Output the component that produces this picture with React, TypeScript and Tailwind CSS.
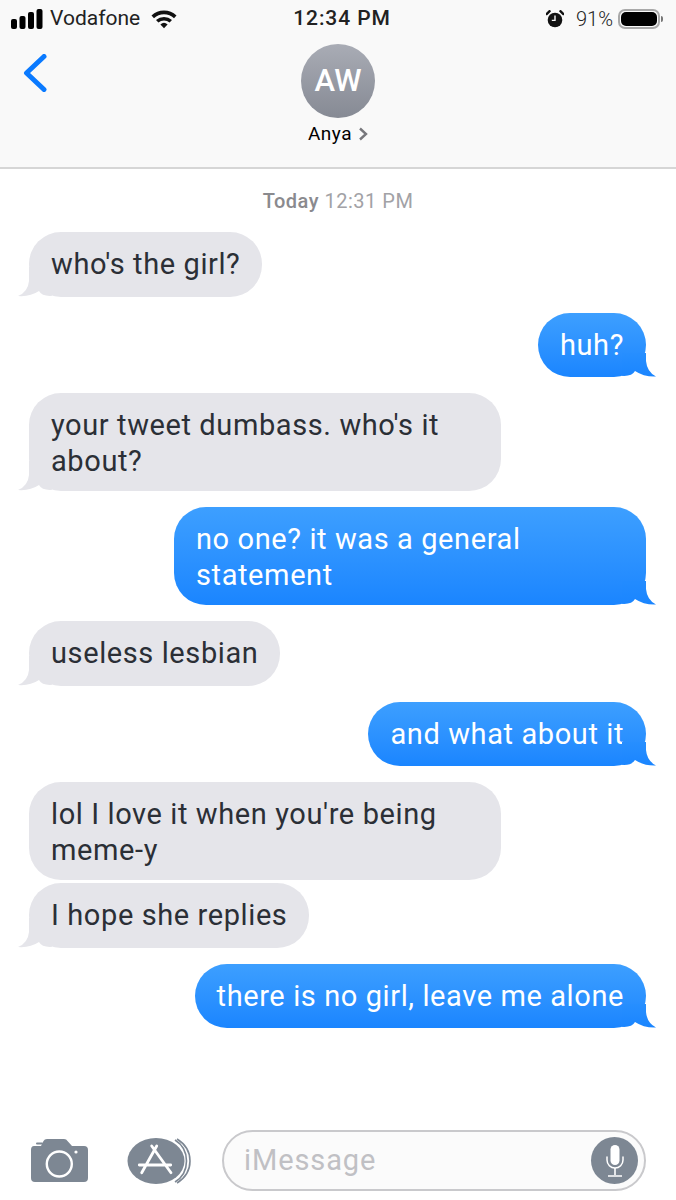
import React from 'react';

const SignalIcon = () => (
  <svg width="32" height="20" viewBox="0 0 32 20" className="shrink-0">
    <rect x="0" y="10" width="6" height="10" rx="2" fill="#000" />
    <rect x="8.5" y="7" width="6" height="13" rx="2" fill="#000" />
    <rect x="17" y="3" width="6" height="17" rx="2" fill="#000" />
    <rect x="25.5" y="0" width="6" height="20" rx="2" fill="#000" />
  </svg>
);

const WifiIcon = () => (
  <svg width="26" height="20" viewBox="0 0 26 20">
    <path d="M0.5 6.5 A18 18 0 0 1 25.5 6.5 L23 9.2 A14.5 14.5 0 0 0 3 9.2 Z" fill="#111" />
    <path d="M5 11 A12 12 0 0 1 21 11 L18.6 13.6 A8.5 8.5 0 0 0 7.4 13.6 Z" fill="#111" />
    <path d="M9.4 15.4 A5.5 5.5 0 0 1 16.6 15.4 L13 19.2 Z" fill="#111" />
  </svg>
);

const AlarmIcon = () => (
  <svg width="18" height="18" viewBox="0 0 18 18">
    <circle cx="9" cy="10" r="7.3" fill="#111" />
    <path d="M9 5.5 V10.4 H5.8" stroke="#f9f9f9" strokeWidth="1.4" fill="none" />
    <path d="M0.6 4 L3.6 1.2 M17.4 4 L14.4 1.2" stroke="#111" strokeWidth="2.4" strokeLinecap="round" />
  </svg>
);

const BatteryIcon = () => (
  <div className="flex items-center gap-[1px]">
    <div className="w-[42px] h-[20px] rounded-[7px] border-2 border-[#a9a9a9] p-[1px]">
      <div className="w-full h-full rounded-[5px] bg-black" />
    </div>
    <div className="w-[2px] h-[6px] rounded-r-full bg-[#777]" />
  </div>
);

const CameraIcon = () => (
  <svg width="59" height="44" viewBox="0 0 59 44">
    <path d="M4 7 H11 L13.5 2 Q14.5 0 17 0 H34 Q36.5 0 37.5 2 L42 7 H54 Q58 7 58 11 V39 Q58 43 54 43 H5 Q1 43 1 39 V11 Q1 7 4 7 Z" fill="#7d8793" />
    <rect x="6" y="3.5" width="7" height="2" rx="1" fill="#7d8793" />
    <circle cx="29.3" cy="25" r="12.5" fill="none" stroke="#fff" strokeWidth="2.4" />
    <circle cx="46" cy="13" r="1.6" fill="#fff" />
  </svg>
);

const AppStoreIcon = () => (
  <svg width="64" height="48" viewBox="0 0 64 48">
    <path d="M48 3 Q59.5 10 59.5 24 Q59.5 38 48 45" fill="none" stroke="#7d8793" strokeWidth="1.6" />
    <path d="M50 2 Q63 10 63 24 Q63 38 50 46" fill="none" stroke="#7d8793" strokeWidth="1.6" />
    <ellipse cx="29" cy="24" rx="28.5" ry="23" fill="#7d8793" />
    <path d="M24.7 9 L44 35.7 M29.7 9 L14.7 35.7 M12.3 28 H43.7" fill="none" stroke="#fff" strokeWidth="2.8" strokeLinecap="round" />
  </svg>
);

const MicIcon = () => (
  <div className="w-[47px] h-[47px] rounded-full bg-[#7d8793] flex items-center justify-center">
    <svg width="20" height="34" viewBox="0 0 20 34">
      <rect x="5.5" y="1" width="9" height="20" rx="4.5" fill="#fff" />
      <path d="M2 13 V16 A8 8 0 0 0 18 16 V13" fill="none" stroke="#fff" strokeWidth="1.5" strokeLinecap="round" />
      <path d="M10 24 V31 M3 32 H17" fill="none" stroke="#fff" strokeWidth="1.6" />
    </svg>
  </div>
);

type Msg = { text: string; mine: boolean; mt: string; h: number; noTail?: boolean };

const messages: Msg[] = [
  { text: "who's the girl?", mine: false, mt: 'mt-[14px]', h: 65 },
  { text: 'huh?', mine: true, mt: 'mt-4', h: 65 },
  { text: "your tweet dumbass. who's it about?", mine: false, mt: 'mt-4', h: 98 },
  { text: 'no one? it was a general statement', mine: true, mt: 'mt-4', h: 98 },
  { text: 'useless lesbian', mine: false, mt: 'mt-4', h: 65 },
  { text: 'and what about it', mine: true, mt: 'mt-4', h: 65 },
  { text: "lol I love it when you're being meme-y", mine: false, mt: 'mt-4', h: 98, noTail: true },
  { text: 'I hope she replies', mine: false, mt: 'mt-[3px]', h: 65 },
  { text: 'there is no girl, leave me alone', mine: true, mt: 'mt-4', h: 65 },
];

const Bubble = ({ text, mine, mt, h, noTail, id }: Msg & { id: string }) => (
  <div className={`flex ${mine ? 'justify-end' : 'justify-start'} ${mt}`}>
    <div
      className={`relative max-w-[472px] min-h-[64.5px] px-[22px] rounded-[32px] flex items-center text-[29px] leading-[36px] tracking-[0.6px] ${
        h > 65 ? 'pt-[14px] pb-[12px]' : 'py-[13px]'
      } ${mine ? 'bg-gradient-to-b from-[#3d9fff] to-[#1a85ff] text-white' : 'bg-[#e5e5ea] text-[#2b2f36]'}`}
    >
      <span>{text}</span>
      {!noTail && !mine && (
        <svg width="34" height="30" viewBox="0 0 34 30" className="absolute left-[-11px] bottom-0">
          <path d="M11 0 V14 Q10 25 0 29 Q12 30 21 24 Q24 29.5 34 28.8 V0 Z" fill="#e5e5ea" />
        </svg>
      )}
      {!noTail && mine && (
        <svg width="34" height="30" viewBox="0 0 34 30" className="absolute right-[-10px] bottom-0">
          <defs>
            {/* same ramp as the bubble, so the tail does not show as a patch */}
            <linearGradient id={id} gradientUnits="userSpaceOnUse" x1="0" x2="0" y1={30 - h} y2="30">
              <stop offset="0" stopColor="#3d9fff" />
              <stop offset="1" stopColor="#1a85ff" />
            </linearGradient>
          </defs>
          <path d="M24 6 V14 Q25 25 34 29.5 Q22 30 13 24 Q10 29.5 0 28.8 V6 Z" fill={`url(#${id})`} />
        </svg>
      )}
    </div>
  </div>
);

export default function App() {
  return (
    <div className="w-[676px] h-[1200px] bg-white flex flex-col overflow-hidden font-['Roboto',sans-serif]">
      <header className="h-[169px] shrink-0 bg-[#f9f9f9] border-b-2 border-[#d6d6d6]">
        <div className="h-[37px] grid grid-cols-[1fr_auto_1fr] items-center pl-[11px] pr-[13px]">
          <div className="flex items-center">
            <SignalIcon />
            <span className="ml-[7px] text-[21px] text-[#222]">Vodafone</span>
            <span className="ml-[11px] flex"><WifiIcon /></span>
          </div>
          <div className="pl-[10px] text-[21px] font-medium tracking-[0.9px] text-[#222]">12:34 PM</div>
          <div className="flex items-center justify-end">
            <AlarmIcon />
            <span className="ml-[12px] text-[20px] font-light text-[#222]">91%</span>
            <span className="ml-[5px]"><BatteryIcon /></span>
          </div>
        </div>
        <div className="grid grid-cols-[1fr_auto_1fr] mt-[7px]">
          <div className="pl-[23px] pt-[10px]">
            <svg width="24" height="38" viewBox="0 0 24 38">
              <path d="M21 2.5 L3.5 19 L21 35.5" fill="none" stroke="#0a7aff" strokeWidth="5" strokeLinecap="round" strokeLinejoin="round" />
            </svg>
          </div>
          <div className="flex flex-col items-center">
            <div className="w-[74px] h-[74px] rounded-full bg-gradient-to-b from-[#a9acb5] to-[#868a94] flex items-center justify-center text-white text-[31px] font-medium">
              AW
            </div>
            <div className="mt-[5px] flex items-center text-[19px] leading-[22px] tracking-[0.5px] text-black">
              Anya
              <svg width="10" height="14" viewBox="0 0 10 14" className="ml-[6px]">
                <path d="M2 1.5 L8 7 L2 12.5" fill="none" stroke="#77777c" strokeWidth="2.4" />
              </svg>
            </div>
          </div>
          <div />
        </div>
      </header>

      <main className="px-[30px]">
        <div className="mt-[20px] h-[29px] text-center text-[20px] leading-[25px] tracking-[0.5px] text-[#a2a2a6]">
          <span className="font-medium text-[#8a8a8e]">Today</span> 12:31 PM
        </div>
        <div className="-ml-[1px]">
          {messages.map((m, i) => (
            <Bubble key={i} id={`tail-${i}`} {...m} />
          ))}
        </div>
      </main>

      <footer className="mt-auto mb-[9px] px-[30px] flex items-center">
        <CameraIcon />
        <span className="ml-[38px] flex"><AppStoreIcon /></span>
        <div className="ml-[31px] flex-1 h-[61px] rounded-full border-2 border-[#c9c9cc] bg-[#fbfbfb] flex items-center justify-between pl-[20px] pr-[6px]">
          <span className="text-[29px] text-[#c0c0c4] tracking-[0.9px]">iMessage</span>
          <MicIcon />
        </div>
      </footer>
    </div>
  );
}
